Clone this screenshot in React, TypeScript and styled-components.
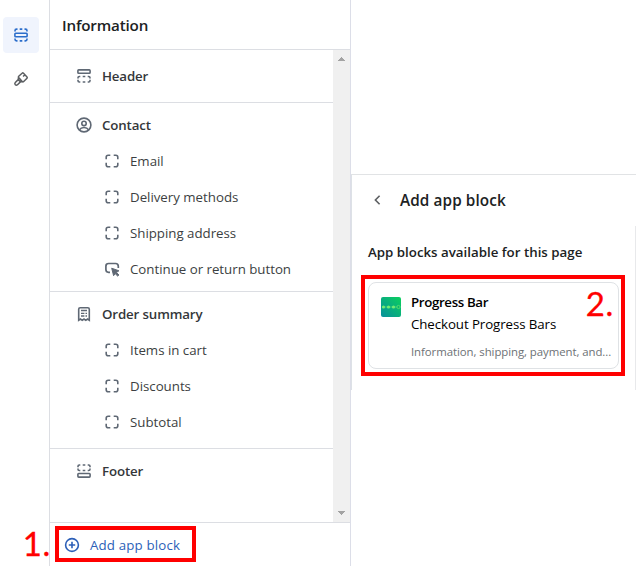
import React from "react";
import styled, { createGlobalStyle } from "styled-components";

const Global = createGlobalStyle`
  * { box-sizing: border-box; }
  body { margin: 0; background: #fff; overflow: hidden; font-family: "Open Sans", "Noto Sans", sans-serif; color: #202223; }
`;

const Page = styled.div`
  display: grid;
  grid-template-columns: 50px 301px 1fr;
  width: 636px;
  height: 566px;
`;

const Rail = styled.nav`
  display: flex;
  flex-direction: column;
  align-items: center;
  gap: 8px;
  padding: 17px 7px 0 0;
  border-right: 1px solid #dcdee3;
`;

const RailButton = styled.div<{ $active?: boolean }>`
  display: flex;
  align-items: center;
  justify-content: center;
  width: 36px;
  height: 36px;
  flex: none;
  border-radius: 4px;
  background: ${(p) => (p.$active ? "#f0f4fd" : "transparent")};
  color: ${(p) => (p.$active ? "#2c6ecb" : "#5c5f62")};
`;

const Sidebar = styled.aside`
  display: flex;
  flex-direction: column;
  min-height: 0;
  border-right: 1px solid #dcdee8;
`;

const SidebarTitle = styled.header`
  height: 50px;
  padding: 13px 12px 0;
  border-bottom: 1px solid #dcdee3;
  font-size: 15.2px;
  line-height: 24px;
  font-weight: 600;
  letter-spacing: -0.17px;
`;

const ScrollArea = styled.div`
  display: grid;
  grid-template-columns: 1fr 17px;
  height: 472px;
`;

const Section = styled.section<{ $top: number; $bottom: number }>`
  padding: ${(p) => p.$top}px 0 ${(p) => p.$bottom}px;
  & + & { border-top: 1px solid #dcdee3; }
`;

const Row = styled.div<{ $child?: boolean }>`
  display: flex;
  align-items: center;
  gap: 8px;
  height: 36px;
  padding-left: ${(p) => (p.$child ? 52 : 24)}px;
  color: ${(p) => (p.$child ? "#3c3f42" : "#34373a")};
  font-size: 13.3px;
  line-height: 20px;
  font-weight: ${(p) => (p.$child ? 400 : 600)};
  letter-spacing: ${(p) => (p.$child ? -0.02 : -0.14)}px;
  white-space: nowrap;
`;

const Icon = styled.svg`
  width: 20px;
  height: 20px;
  flex: none;
  fill: none;
  stroke: #5f6874;
  stroke-width: 1.6;
`;

const RailIcon = styled(Icon)`
  stroke: currentColor;
`;

const Scrollbar = styled.div`
  display: flex;
  flex-direction: column;
  justify-content: space-between;
  align-items: center;
  padding: 7px 0 7px;
  background: #f0f0f0;
`;

const Arrow = styled.svg`
  width: 7px;
  height: 4px;
  fill: #a3a3a3;
`;

const SidebarFooter = styled.footer`
  flex: 1;
  border-top: 1px solid #dcdee3;
  padding: 3px 0 0 5px;
`;

const AddBlock = styled.div`
  position: relative;
  display: flex;
  align-items: center;
  gap: 8px;
  width: 141px;
  height: 36px;
  padding: 2px 0 0 3px;
  border: 4px solid #f00;
  color: #2c5fb8;
  font-size: 13.3px;
  line-height: 20px;
  letter-spacing: 0.16px;
`;

const Step = styled.span`
  position: absolute;
  color: #f00;
  font-family: Lato, "Open Sans", sans-serif;
  font-size: 33px;
  line-height: 40px;
  letter-spacing: 0.6px;
  -webkit-text-stroke: 0.3px #f00;
`;

const StepOne = styled(Step)`
  right: 141px;
  top: -7px;
`;

const StepTwo = styled(Step)`
  right: 4px;
  top: 0;
`;

const Main = styled.main`
  display: flex;
  flex-direction: column;
  padding-top: 174px;
`;

const Picker = styled.div`
  width: 285px;
  height: 216px;
  border-top: 1px solid #e1e3e5;
  border-left: 1px solid #dde1e6;
`;

const PickerTitle = styled.div`
  display: flex;
  align-items: center;
  gap: 13px;
  height: 51px;
  padding: 0 0 2px 15px;
  font-size: 15.3px;
  font-weight: 600;
  letter-spacing: 0.1px;
`;

const PickerBody = styled.div`
  height: 164px;
  border-right: 1px solid #e8e9eb;
  padding: 16px 10px 0 9px;
`;

const Caption = styled.div`
  padding-left: 7px;
  font-size: 13.3px;
  line-height: 20px;
  font-weight: 600;
  white-space: nowrap;
`;

const Highlight = styled.div`
  width: 264px;
  height: 101px;
  margin-top: 13px;
  padding: 3px;
  border: 4px solid #f00;
`;

const Card = styled.div`
  position: relative;
  display: flex;
  gap: 10px;
  width: 251px;
  height: 87px;
  padding: 9px 0 0 12px;
  border: 1px solid #dfe2e5;
  border-radius: 8px;
`;

const CardText = styled.div`
  display: flex;
  flex-direction: column;
  color: #000;
  white-space: nowrap;
`;

const CardName = styled.div`
  font-size: 13.3px;
  line-height: 20px;
  font-weight: 600;
  letter-spacing: -0.36px;
`;

const CardApp = styled.div`
  font-size: 13.3px;
  line-height: 24px;
  letter-spacing: -0.09px;
`;

const CardNote = styled.div`
  margin-top: 6px;
  color: #6d7175;
  font-size: 11.4px;
  line-height: 20px;
  letter-spacing: -0.06px;
`;

const AppLogo = styled.svg`
  width: 20px;
  height: 20px;
  margin-top: 5px;
  flex: none;
`;

function BlockIcon() {
  return (
    <Icon viewBox="0 0 20 20">
      <path d="M8.3 4.2H6.2a2 2 0 0 0-2 2v2.1M11.7 4.2h2.1a2 2 0 0 1 2 2v2.1M8.3 15.8H6.2a2 2 0 0 1-2-2v-2.1M11.7 15.8h2.1a2 2 0 0 0 2-2v-2.1" />
    </Icon>
  );
}

function HeaderIcon() {
  return (
    <Icon viewBox="0 0 20 20">
      <rect x="3.9" y="3.9" width="12.2" height="3.4" rx=".8" />
      <path d="M4 12.6v-.8q0-1.300 1.300-1.300h1M8.700 10.500h2.600M13.700 10.500h1q1.300 0 1.300 1.300v.8M4 13.800v.900q0 1.300 1.300 1.300h1M8.700 16h2.600M13.700 16h1q1.300 0 1.300-1.300v-.9" />
    </Icon>
  );
}

function FooterIcon() {
  return (
    <Icon viewBox="0 0 20 20">
      <rect x="3.9" y="12.500" width="12.2" height="3.600" rx=".8" />
      <path d="M4 6.200v-.9q0-1.300 1.300-1.300h1M8.700 4h2.600M13.700 4h1q1.300 0 1.300 1.300v.9M4 7.400v.800q0 1.300 1.300 1.300h1M8.700 9.500h2.600M13.700 9.500h1q1.300 0 1.300-1.300v-.8" />
    </Icon>
  );
}

function ContactIcon() {
  return (
    <Icon viewBox="0 0 20 20">
      <circle cx="10" cy="10" r="6.900" />
      <circle cx="10" cy="8.400" r="2.200" />
      <path d="M5.400 14.800c1-1.600 2.600-2.300 4.600-2.300s3.600.7 4.600 2.300" />
    </Icon>
  );
}

function ReceiptIcon() {
  return (
    <Icon viewBox="0 0 20 20">
      <path d="M4.700 16.300V5.200q0-1.500 1.500-1.500h7.600q1.500 0 1.500 1.500v11.100l-1.800-1.300-1.700 1.300-1.800-1.300-1.800 1.300-1.700-1.300z" />
      <path strokeWidth="1.300" d="M7 6.500h6M7 9.300h3.400M11.500 9.300H13M7 12h3.400M11.500 12H13" />
    </Icon>
  );
}

function ButtonIcon() {
  return (
    <Icon viewBox="0 0 20 20">
      <path strokeWidth="1.700" d="M8 13.300H6.600q-2.700 0-2.700-2.700V7.200q0-2.700 2.700-2.700h7q2.700 0 2.700 2.700v1.900" />
      <path fill="#5f6874" strokeWidth="1" strokeLinejoin="round" d="M9.700 9.200l7.200 2.600-2.500 1.700 2.500 2.500-1.200 1.100-2.600-2.500-1.500 2.100z" />
    </Icon>
  );
}

const sections = [
  { title: "Header", icon: <HeaderIcon />, top: 8, bottom: 8, items: [] },
  { title: "Contact", icon: <ContactIcon />, top: 4, bottom: 4, items: ["Email", "Delivery methods", "Shipping address", "Continue or return button"] },
  { title: "Order summary", icon: <ReceiptIcon />, top: 4, bottom: 8, items: ["Items in cart", "Discounts", "Subtotal"] },
  { title: "Footer", icon: <FooterIcon />, top: 4, bottom: 8, items: [] },
];

export default function App() {
  return (
    <>
      <Global />
      <Page>
        <Rail>
          <RailButton $active>
            <RailIcon viewBox="0 0 20 20">
              <rect x="3.900" y="8.300" width="12.200" height="3.400" rx=".8" />
              <path d="M4 6.400v-.7q0-1.600 1.600-1.600h.9M8.700 4.100h2.600M13.500 4.100h.9q1.600 0 1.600 1.600v.7M4 13.600v.7q0 1.600 1.600 1.600h.9M8.700 15.900h2.600M13.500 15.900h.9q1.600 0 1.600-1.600v-.7" />
            </RailIcon>
          </RailButton>
          <RailButton>
            <RailIcon viewBox="0 0 20 20">
              <path strokeWidth="1.500" strokeLinejoin="round" d="M7.700 7.300l3.400-3.100q.7-.6 1.400 0l3.500 3.700q.6.700 0 1.300l-3.300 3.300q-.8.700-1.500 0L7.700 8.600q-.6-.7 0-1.300zM7.500 8.400L7.200 10.600 4.300 13.500q-1 1.200 0 2.200t2.200 0l2.900-2.800 2.100-.3M7.200 10.600l2.300 2.300M13.900 5.700l-1.800 1.900" />
            </RailIcon>
          </RailButton>
        </Rail>
        <Sidebar>
          <SidebarTitle>Information</SidebarTitle>
          <ScrollArea>
            <div>
              {sections.map((s) => (
                <Section key={s.title} $top={s.top} $bottom={s.bottom}>
                  <Row>{s.icon}<span>{s.title}</span></Row>
                  {s.items.map((item) => (
                    <Row key={item} $child>
                      {item.startsWith("Continue") ? <ButtonIcon /> : <BlockIcon />}
                      <span>{item}</span>
                    </Row>
                  ))}
                </Section>
              ))}
            </div>
            <Scrollbar>
              <Arrow viewBox="0 0 7 4"><path d="M3 0h1v1h1v1h1v1h1v1H0V3h1V2h1V1h1z" /></Arrow>
              <Arrow viewBox="0 0 7 4"><path d="M3 4h1V3h1V2h1V1h1V0H0v1h1v1h1v1h1z" /></Arrow>
            </Scrollbar>
          </ScrollArea>
          <SidebarFooter>
            <AddBlock>
              <StepOne>1.</StepOne>
              <RailIcon viewBox="0 0 20 20">
                <circle cx="10" cy="10" r="6.400" />
                <path d="M10 6.800v6.400M6.800 10h6.400" />
              </RailIcon>
              <span>Add app block</span>
            </AddBlock>
          </SidebarFooter>
        </Sidebar>
        <Main>
          <Picker>
            <PickerTitle>
              <RailIcon viewBox="0 0 20 20"><path stroke="#5c5f62" d="M12.600 5.700L8.400 10l4.200 4.300" /></RailIcon>
              <span>Add app block</span>
            </PickerTitle>
            <PickerBody>
              <Caption>App blocks available for this page</Caption>
              <Highlight>
                <Card>
                  <AppLogo viewBox="0 0 20 20">
                    <defs>
                      <linearGradient id="logo" x1="0" y1="1" x2="1" y2="0">
                        <stop offset="0" stopColor="#078f9c" />
                        <stop offset="1" stopColor="#0bd05d" />
                      </linearGradient>
                    </defs>
                    <rect width="20" height="20" rx="2" fill="url(#logo)" />
                    <path stroke="#65e36b" strokeWidth=".6" d="M2 10h14" />
                    <g fill="#74ec72"><circle cx="2.500" cy="10" r="1.600" /><circle cx="7.500" cy="10" r="1.600" /><circle cx="12.500" cy="10" r="1.600" /></g>
                    <circle cx="17.500" cy="10" r="1.600" fill="#0cb36f" stroke="#65e36b" strokeWidth=".8" />
                  </AppLogo>
                  <CardText>
                    <CardName>Progress Bar</CardName>
                    <CardApp>Checkout Progress Bars</CardApp>
                    <CardNote>Information, shipping, payment, and...</CardNote>
                  </CardText>
                  <StepTwo>2.</StepTwo>
                </Card>
              </Highlight>
            </PickerBody>
          </Picker>
        </Main>
      </Page>
    </>
  );
}
